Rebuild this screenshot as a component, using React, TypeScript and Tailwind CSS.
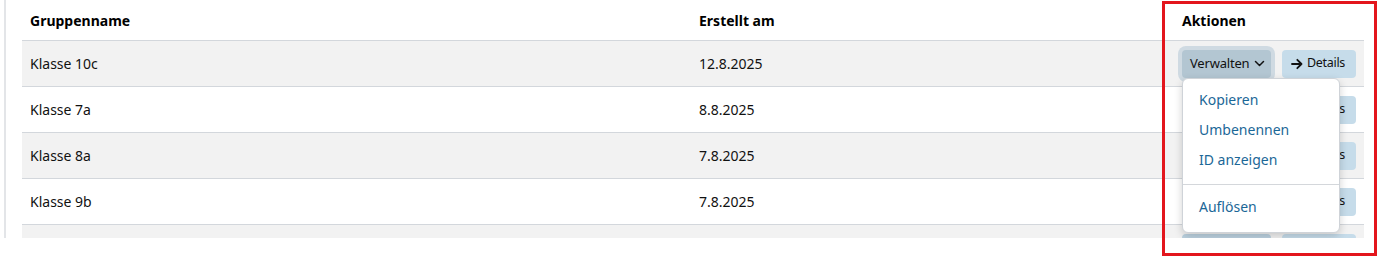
import React from 'react';

type Group = {
  name: string;
  created: string;
};

const groups: Group[] = [
  { name: 'Klasse 10c', created: '12.8.2025' },
  { name: 'Klasse 7a', created: '8.8.2025' },
  { name: 'Klasse 8a', created: '7.8.2025' },
  { name: 'Klasse 9b', created: '7.8.2025' },
  { name: 'Klasse 9c', created: '5.8.2025' },
];

const Chevron = () => (
  <svg width="11" height="11" viewBox="0 0 11 11" fill="none" className="ml-[5px] shrink-0">
    <path d="M1.5 3.5 5.5 7.5l4-4" stroke="#111" strokeWidth="1.5" strokeLinecap="round" strokeLinejoin="round" />
  </svg>
);

const Arrow = () => (
  <svg width="12" height="12" viewBox="0 0 12 12" fill="none" className="mr-[4px] shrink-0">
    <path d="M1 6h9.5M6.3 1.8 10.5 6l-4.2 4.2" stroke="#111" strokeWidth="1.8" strokeLinecap="round" strokeLinejoin="round" />
  </svg>
);

const ManageMenu = () => (
  <div className="absolute left-0 top-[28px] z-10 w-[158px] rounded-md border border-[#cfd3d8] bg-white pt-[6px] pb-[10px] shadow-[0_3px_8px_rgba(0,0,0,0.18)]">
    {['Kopieren', 'Umbenennen', 'ID anzeigen'].map(item => (
      <div key={item} className="flex h-[30px] items-center px-[16px] text-[14px] text-[#1b6797]">
        {item}
      </div>
    ))}
    <div className="mt-[9px] mb-[7px] h-px bg-[#d4d7db]"></div>
    <div className="flex h-[30px] items-center px-[16px] text-[14px] text-[#1b6797]">Auflösen</div>
  </div>
);

const App: React.FC = () => {
  return (
    <div className="relative h-[257px] w-full bg-white text-[#111] font-['Noto_Sans',sans-serif]">
      <div className="ml-[4px] flex h-[238px] overflow-hidden border-l-2 border-[#e3e5e8] pl-[16px]">
        <div className="w-[1342px]">
          <div className="grid h-[41px] grid-cols-[669px_483px_190px] items-center border-b border-[#d3d7dc] text-[14px] font-bold text-black">
            <div className="px-[8px]">Gruppenname</div>
            <div className="px-[8px]">Erstellt am</div>
            <div className="px-[8px]">Aktionen</div>
          </div>
          {groups.map((g, i) => (
            <div
              key={g.name}
              className={`grid h-[46px] grid-cols-[669px_483px_190px] items-center border-b border-[#d3d7dc] text-[14px] ${
                i % 2 === 0 ? 'bg-[#f2f2f2]' : 'bg-white'
              }`}
            >
              <div className="px-[8px]">{g.name}</div>
              <div className="px-[8px]">{g.created}</div>
              <div className="flex items-center px-[8px]">
                <div className="relative">
                  <button
                    className={`flex h-[28px] w-[89px] items-center whitespace-nowrap rounded-[4px] pl-[8px] pr-[4px] text-[13px] tracking-[-0.2px] ${
                      i === 0 ? 'bg-[#b3c6d2] ring-4 ring-[#cfdae2]' : 'bg-[#bcd2e0]'
                    }`}
                  >
                    Verwalten
                    <Chevron />
                  </button>
                  {i === 0 && <ManageMenu />}
                </div>
                <button className="ml-[11px] flex h-[28px] w-[74px] items-center whitespace-nowrap rounded-[4px] bg-[#c6dcea] pl-[9px] pr-[4px] text-[12.5px] tracking-[-0.3px]">
                  <Arrow />
                  Details
                </button>
              </div>
            </div>
          ))}
        </div>
      </div>
      <div className="pointer-events-none absolute left-[1162px] top-[1px] h-[255px] w-[215px] border-[3px] border-[#e3161d]"></div>
    </div>
  );
};

export default App;
